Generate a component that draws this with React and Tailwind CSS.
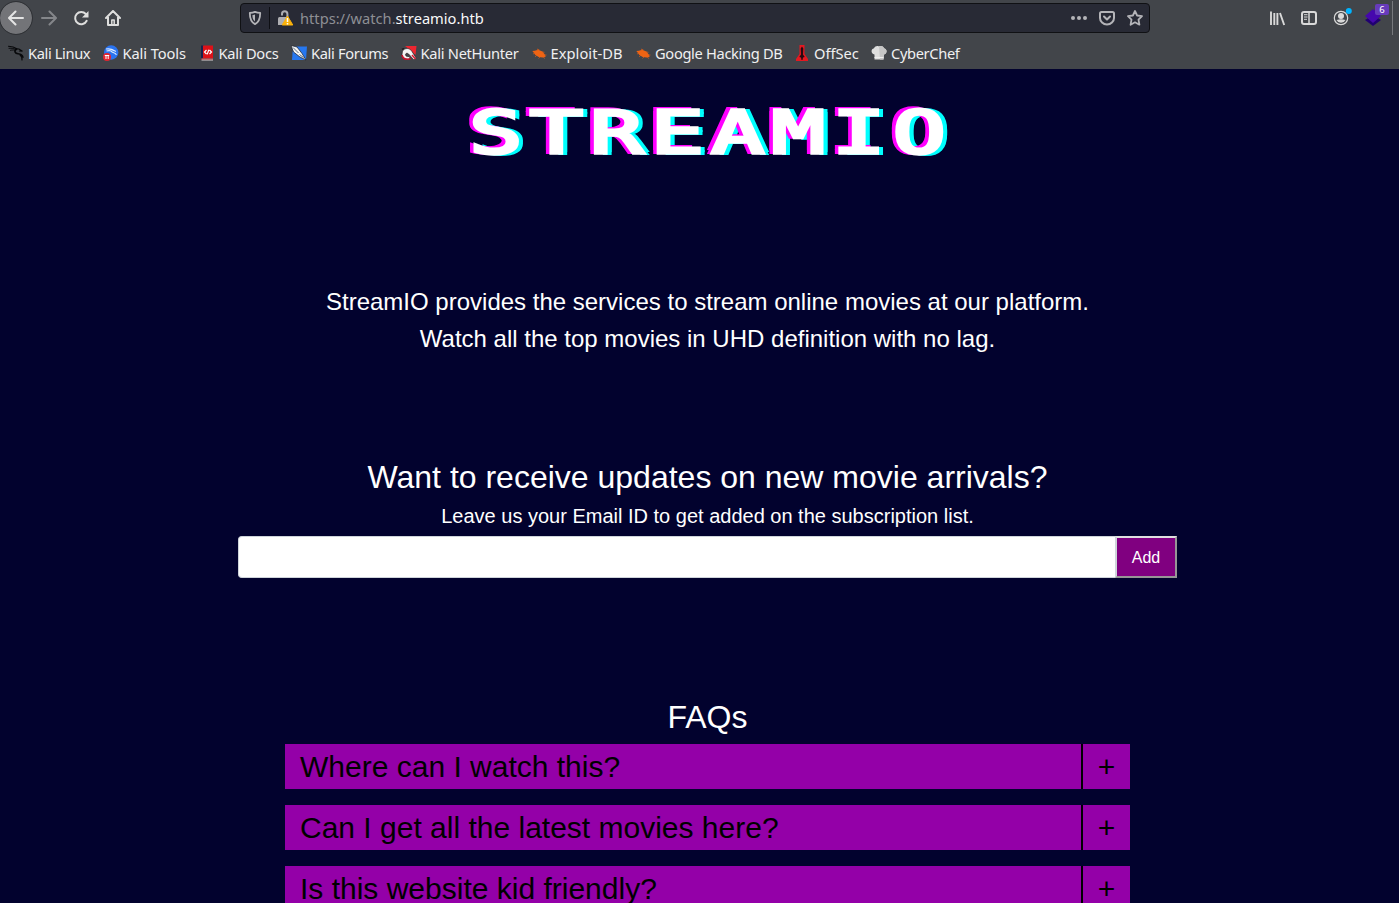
const Dragon = () => (
  <svg width="16" height="16" viewBox="0 0 16 16" fill="none" stroke="#08090b" strokeLinecap="round">
    <path d="M.5 1.200c3 .1 6 .8 8.200 2.600" strokeWidth="1.100" />
    <path d="M1 3.300c3-.2 5 .2 7 1.200M2.500 5.300c2-.5 3.500-.4 5 0" strokeWidth=".9" />
    <path d="M8.500 4c-3 2.200-1.200 4.500 1.500 4.800 2.500.3 4.500 1.500 4.900 3.400" strokeWidth="1.600" />
    <path d="M8 3.800l3 .2 3.500 2.200-3-.2M12 10c1.800 1.200 2.200 3 2 5" strokeWidth="1.200" />
  </svg>
);

const Tools = () => (
  <svg width="16" height="16" viewBox="0 0 16 16">
    <circle cx="8.200" cy="7.500" r="7.200" fill="#2a73f0" />
    <path d="M3 4c3.500-.6 6 0 8 1.800M3.500 6c3-.7 5-.2 5.800 1.200 1.400.4 3.300.8 4.200 2.600M9 4.500l4 2" stroke="#dcecff" strokeWidth="1.200" fill="none" />
    <circle cx="4" cy="12" r="4" fill="#e32531" />
    <path d="M1.800 10.500h4.400M3 10.500v3.500M5.200 10.500v3.500" stroke="#fff" fill="none" />
  </svg>
);

const Docs = () => (
  <svg width="16" height="16" viewBox="0 0 16 16">
    <path d="M2 .5h3v13H2z" fill="#18224e" />
    <path d="M4 .5h10v13H4z" fill="#dd1118" />
    <path d="M2.500 13.500H14V15.500H2.500z" fill="#ddd5d5" />
    <path d="M2 13.500h12v1H2z" fill="#9c1016" />
    <path d="M7.500 5L5.500 7l2 2M10.500 5l2 2-2 2M9.800 4.800L8.200 9.400" stroke="#fff" strokeWidth="1.200" fill="none" />
  </svg>
);

const Forums = () => (
  <svg width="16" height="16" viewBox="0 0 16 16">
    <path d="M2 1.500h14L15 15H1z" fill="#2677ef" />
    <path d="M0 .5L6 2l5 6.500 4 6.500-6-3L2.500 7z" fill="#f4f5f5" stroke="#171b23" strokeWidth=".7" />
    <path d="M2 2.500L7.500 8M8.500 9.500l4 3" stroke="#33475f" strokeWidth=".8" />
  </svg>
);

const NetHunter = () => (
  <svg width="16" height="16" viewBox="0 0 16 16">
    <path d="M4 1h11.500l-1 9-4-4z" fill="#ed2630" />
    <path d="M1.500 6C4 2.500 9 2.800 11 6.500l4 6.500-2 2-4.500-5C6.800 7.500 4.500 8 4.500 9.700c0 1.600 1.800 2 3.500 1.800l1.500 2C5 15.500 1 13 1 9.700z" fill="#f5f3f3" stroke="#24151b" strokeWidth=".6" />
    <path d="M1 10c.5 3 3 4.500 6.500 4.300l2.200-.8" stroke="#c4142d" strokeWidth="1.600" fill="none" />
    <path d="M11 10l3.500 4" stroke="#d71931" strokeWidth="1.500" />
    <path d="M.5 3.800l3-.7L2 5" fill="#111" />
  </svg>
);

const Bug = () => (
  <svg width="16" height="16" viewBox="0 0 16 16">
    <path d="M1.300 6l2.500-.2 3.400-1 4.200 1.700 2.600 3.200.7 2-3.200.8-3.800-.5-3.400-2L3 8z" fill="#ef6414" />
    <path d="M7 6L6.500 4 8.500 5M11 7l2.500.3M13 10l2.500 0M6 10L4 12M9 12l-1.500 1.500M12 12l2 1.500M4 8L2 9" stroke="#d85c18" strokeWidth=".7" fill="none" />
  </svg>
);

const OffSec = () => (
  <svg width="16" height="16" viewBox="0 0 16 16">
    <path d="M5.500 0h5v9l3.500 5v2H2v-2l3.500-5z" fill="#e51820" />
    <path d="M8 1.500l1.300 2L9 9.500l1.700 2.500-1.700.5-.5 2.500h-1L7 12.500 5.300 12 7 9.500l-.3-6z" fill="#260b12" />
  </svg>
);

const Chef = () => (
  <svg width="16" height="16" viewBox="0 0 16 16">
    <path d="M3.500 14.500V9.500C-.4 9-.3 3.800 3 3.200 4 1 6.500.6 8 1.500c2-.9 4.300-.2 5 1.700 3.300.6 3.500 5.500 0 6.300L12.500 14.500z" fill="#dedede" />
    <path d="M8 1.500c2-.9 4.300-.2 5 1.700 3.300.6 3.500 5.500 0 6.300L12.500 14.500H9z" fill="#c5c5c5" />
    <path d="M3.500 12.500h9" stroke="#eee" />
  </svg>
);

const bookmarks = [
  [Dragon, "Kali Linux", "w-[94.5px] tracking-[-0.38px]"],
  [Tools, "Kali Tools", "w-[96px] tracking-[-0.1px]"],
  [Docs, "Kali Docs", "w-[92.5px] tracking-[-0.25px]"],
  [Forums, "Kali Forums", "w-[109.5px] tracking-[-0.34px]"],
  [NetHunter, "Kali NetHunter", "w-[130px] tracking-[-0.28px]"],
  [Bug, "Exploit-DB", "w-[104.5px] tracking-[0.05px]"],
  [Bug, "Google Hacking DB", "w-[159px] tracking-[-0.33px]"],
  [OffSec, "OffSec", "w-[77px]"],
  [Chef, "CyberChef", "w-[100px] tracking-[-0.35px]"],
];

function BrowserChrome() {
  return (
    <header className="h-[69px] w-[1399px] bg-[#42454a] font-['Noto_Sans',sans-serif] text-[#f0f0f1]">
      <div className="flex h-9 items-center">
        <div className="flex w-60 items-center">
          <span className="flex size-8 items-center justify-center rounded-full bg-[#737478] outline outline-[#303236]">
            <svg width="16" height="16" viewBox="0 0 16 16" fill="none" stroke="#e4e4e4" strokeWidth="2" strokeLinecap="round" strokeLinejoin="round">
              <path d="M15 8H1.500M7.500 1.500L1 8l6.500 6.500" />
            </svg>
          </span>
          <svg className="ml-[9px]" width="16" height="16" viewBox="0 0 16 16" fill="none" stroke="#84868a" strokeWidth="2" strokeLinecap="round" strokeLinejoin="round">
            <path d="M1 8h13.500M8.500 1.500L15 8l-6.500 6.500" />
          </svg>
          <svg className="ml-4" width="16" height="16" viewBox="0 0 16 16" fill="none" stroke="#dededd" strokeWidth="2">
            <path d="M13.700 10.800A6.100 6.100 0 1 1 12.800 4L14 5.500" strokeLinecap="round" />
            <path d="M15.500 1v6.500H9z" fill="#dededd" stroke="none" />
          </svg>
          <svg className="ml-4" width="16" height="16" viewBox="0 0 16 16" fill="none" stroke="#dededd" strokeWidth="2" strokeLinecap="round" strokeLinejoin="round">
            <path d="M1 8l7-7 7 7M3 7v8h10V7" />
            <path d="M6.800 14.500V10h2.400v4.500" strokeWidth="1.500" />
          </svg>
        </div>
        <div className="flex h-[30px] w-[910px] items-center rounded-[4px] border border-[#101114] bg-[#282a35]">
          <svg className="ml-[7px]" width="14" height="16" viewBox="0 0 14 16">
            <path d="M7 1.800c2 .8 3.500 1 5.200 1.100 0 5.600-1 9-5.200 11.200C2.800 11.900 1.800 8.500 1.800 2.900 3.500 2.800 5 2.600 7 1.800z" fill="none" stroke="#b4b4b8" strokeWidth="1.800" strokeLinejoin="round" />
            <path d="M7 4.500v7C5 10 4.500 8 4.400 5.200z" fill="#b4b4b8" />
          </svg>
          <span className="ml-[7px] h-[22px] w-px bg-[#0e0f14]" />
          <svg className="ml-[7px]" width="17" height="16" viewBox="0 0 17 16">
            <path d="M5 5.500V4a2.700 2.700 0 0 1 5.400 0v4" fill="none" stroke="#aeaeb2" strokeWidth="2" />
            <path d="M1 8.500q0-1.500 1.500-1.500H10q1.500 0 1.500 1.500v6.500H1z" fill="#aeaeb2" />
            <path d="M10.500 6L15.800 15H5.200z" fill="#fbb20b" stroke="#fbb20b" strokeWidth="1" strokeLinejoin="round" />
            <path d="M10.500 8v4M10.500 13v1.500" stroke="#fff" strokeWidth="1.500" />
          </svg>
          <span className="ml-[6px] flex-1 text-[14.670px] leading-5 text-[#8e8f94]">https://watch.<span className="text-[#f9f9fa]">streamio.htb</span></span>
          <svg width="16" height="16" viewBox="0 0 16 16" fill="#b4b4b8"><circle cx="2" cy="8" r="2" /><circle cx="8" cy="8" r="2" /><circle cx="14" cy="8" r="2" /></svg>
          <svg className="ml-3" width="16" height="16" viewBox="0 0 16 16" fill="none" stroke="#b4b4b8" strokeWidth="2" strokeLinecap="round" strokeLinejoin="round">
            <path d="M2.500 2h11q1.500 0 1.500 1.500V8A7 6.500 0 0 1 1 8V3.500Q1 2 2.500 2zM5 6.500l3 3 3-3" />
          </svg>
          <svg className="mr-[6px] ml-3" width="16" height="16" viewBox="0 0 16 16" fill="none" stroke="#b4b4b8" strokeWidth="1.800" strokeLinejoin="round">
            <path d="M8 1l2.100 4.500 4.900.7-3.500 3.500.9 5L8 12.300l-4.400 2.400.9-5L1 6.200l4.900-.7z" />
          </svg>
        </div>
        <div className="ml-[119px] flex items-center">
          <svg width="17" height="16" viewBox="0 0 17 16" stroke="#d9d9d9"><path d="M2 1.500V15M5.300 3v12M8.400 3v12M11 3l4.200 12" strokeWidth="1.900" /></svg>
          <svg className="ml-[15px]" width="16" height="16" viewBox="0 0 16 16" fill="none" stroke="#d9d9d9">
            <rect x="1" y="2" width="14" height="12" rx="2" strokeWidth="2" />
            <path d="M8 2v12" strokeWidth="1.500" /><path d="M3 4.700h3.500M3 7h3.500M3 9.300h3" />
          </svg>
          <svg className="ml-4" width="20" height="22" viewBox="0 0 20 22">
            <circle cx="8" cy="11" r="6.700" fill="none" stroke="#d9d9d9" strokeWidth="1.200" />
            <circle cx="8" cy="9" r="3" fill="#d9d9d9" />
            <path d="M3.500 13q4.500-1.500 9 0A5 5 0 0 1 3.500 13z" fill="#d9d9d9" />
            <circle cx="15.800" cy="4" r="3" fill="#00b4ff" />
          </svg>
          <div className="relative ml-[12px] h-7 w-[25px]">
            <svg width="25" height="28" viewBox="0 0 25 28">
              <path d="M0 16l8-5 8 5-8 6z" fill="#210071" /><path d="M0 12l8-7 8 7-8 7z" fill="#4608ad" />
            </svg>
            <span className="absolute top-0 left-[10px] flex h-[11px] w-[14px] items-center justify-center rounded-[2px] bg-[#673bbb] text-[9.500px] leading-none text-white">6</span>
          </div>
          <span className="ml-[2px] h-[34px] w-px bg-[#77797d]" />
        </div>
      </div>
      <nav className="flex h-[33px] items-center pt-px pl-2 text-[14.670px] leading-5">
        {bookmarks.map(([Icon, label, width]) => (
          <a key={label} className={`${width} flex shrink-0 items-center gap-1 whitespace-nowrap`}><Icon />{label}</a>
        ))}
      </nav>
    </header>
  );
}

function Wordmark() {
  return (
    <h1 aria-label="STREAMIO" className="mt-[34px] grid h-[60px] w-[484px] grid-cols-[repeat(8,60.500px)] items-center font-['DejaVu_Sans_Mono',monospace] text-[88px] leading-[60px] text-white [text-shadow:-6px_-4px_#f0f,-6px_1px_#f0f,6.500px_3px_#0ff,6.500px_-2px_#0ff]">
      {"STREAMIO".split("").map((letter, i) => (
        <span key={i} className="flex origin-center scale-y-[0.670] justify-center [-webkit-text-stroke:5px_white]">{letter}</span>
      ))}
    </h1>
  );
}

const questions = ["Where can I watch this?", "Can I get all the latest movies here?", "Is this website kid friendly?"];

export default function App() {
  return (
    <div className="h-[903px] w-[1399px] overflow-hidden bg-[#02022e]">
      <BrowserChrome />
      <main className="flex w-[1415px] flex-col items-center font-['Liberation_Sans',sans-serif] text-white">
        <Wordmark />
        <p className="mt-[120px] text-center text-[24px] leading-[37px]">StreamIO provides the services to stream online movies at our platform.<br />Watch all the top movies in UHD definition with no lag.</p>
        <h2 className="mt-[101px] text-[32px] leading-[38px]">Want to receive updates on new movie arrivals?</h2>
        <p className="mt-[8px] text-[20px] leading-6">Leave us your Email ID to get added on the subscription list.</p>
        <form className="mt-[8px] flex h-[42px] w-[939px]">
          <input aria-label="Email" className="min-w-0 flex-1 rounded-l-[4px] border border-r-0 border-[#ced4da] bg-white px-3 text-black outline-none" />
          <button type="button" className="w-[62px] border-2 border-t-[#e0e0e0] border-r-[#969696] border-b-[#969696] border-l-[#ced4da] bg-[#800080] pt-px text-[16px] leading-6">Add</button>
        </form>
        <h2 className="mt-[120px] text-[32px] leading-[38px]">FAQs</h2>
        <div className="mt-[8px] flex w-[845px] flex-col gap-4 text-[30px] leading-[45px] text-black">
          {questions.map((question) => (
            <div key={question} className="flex h-[45px] bg-[#9400a8]">
              <span className="flex-1 pl-[15px]">{question}</span>
              <span className="w-[49px] border-l-2 border-black text-center">+</span>
            </div>
          ))}
        </div>
      </main>
    </div>
  );
}
